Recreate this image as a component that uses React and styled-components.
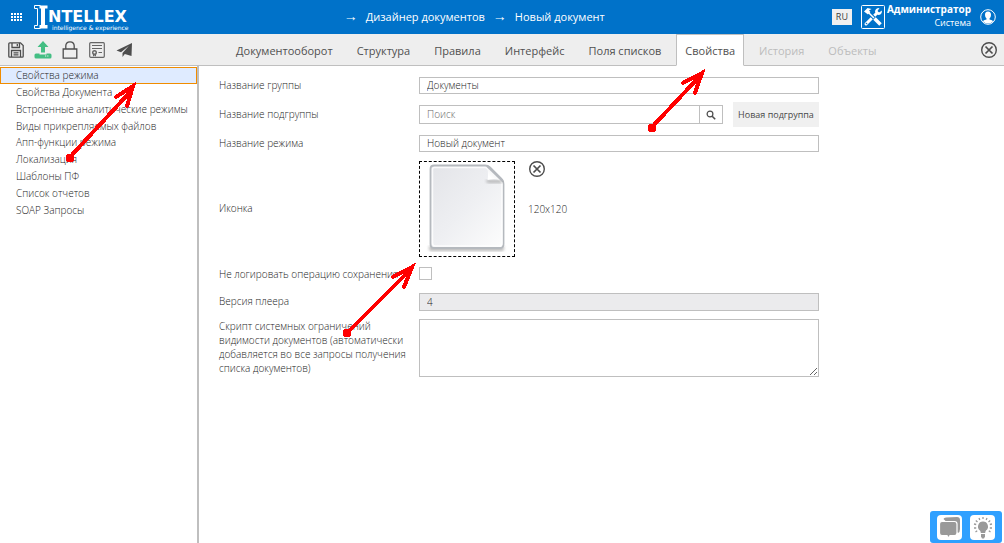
import React, { useState } from 'react';
import styled, { createGlobalStyle } from 'styled-components';

const GlobalStyle = createGlobalStyle`
  * {
    box-sizing: border-box;
  }

  body {
    margin: 0;
    background: #ffffff;
    color: #1c1c1c;
    font-family: 'Open Sans', 'Noto Sans', sans-serif;
    font-size: 10px;
  }

  button, input, textarea {
    margin: 0;
    color: inherit;
    font: inherit;
  }
`;

const Page = styled.div`
  display: flex;
  flex-direction: column;
  min-height: 100vh;
`;

const Header = styled.header`
  display: flex;
  align-items: center;
  height: 34px;
  padding: 0 7px;
  background: #0072c9;
  color: #ffffff;
`;

const Brand = styled.div`
  display: flex;
  align-items: center;
  gap: 9px;
`;

const IconButton = styled.button`
  display: flex;
  align-items: center;
  justify-content: center;
  width: 18px;
  height: 16px;
  padding: 0;
  border: none;
  background: none;
  cursor: pointer;

  svg {
    flex: none;
  }
`;

const Logo = styled.a`
  display: flex;
  color: #ffffff;
  text-decoration: none;
`;

const LogoText = styled.span`
  display: flex;
  flex-direction: column;
  padding-top: 5px;
`;

const LogoName = styled.span`
  font-family: 'DejaVu Sans', sans-serif;
  font-size: 16px;
  font-weight: 700;
  line-height: 15px;
`;

const LogoSlogan = styled.span`
  padding-left: 4px;
  font-family: 'DejaVu Sans', sans-serif;
  font-size: 6px;
  line-height: 7px;
`;

const Breadcrumbs = styled.nav`
  display: flex;
  flex: 1;
  align-items: center;
  justify-content: center;
  gap: 8px;
  padding: 0 12px 2px 0;
  font-size: 11px;
`;

const Crumb = styled.a`
  color: #ffffff;
  text-decoration: none;
`;

const Arrow = styled.span`
  font-size: 14px;
  line-height: 14px;
`;

const Account = styled.div`
  display: flex;
  align-items: center;
`;

const Language = styled.button`
  width: 20px;
  height: 16px;
  margin-right: 9px;
  padding: 0;
  border: none;
  background: #f0f0f0;
  color: #404040;
  font-size: 9px;
  line-height: 14px;
`;

const UserName = styled.div`
  margin: 0 8px 2px 2px;
  font-size: 10px;
  line-height: 13px;
  text-align: right;
`;

const UserRole = styled.div`
  font-size: 9px;
`;

const Toolbar = styled.div`
  display: flex;
  height: 32px;
  border-bottom: 1px solid #bfbfbf;
  background: #eeeeee;
`;

const Tools = styled.div`
  display: flex;
  align-items: center;
  flex: none;
  gap: 9px;
  width: 227px;
  padding-left: 7px;
`;

const Tabs = styled.nav`
  display: flex;
  flex: 1;
  gap: 6px;
`;

const Tab = styled.button`
  height: 32px;
  padding: 0 8px;
  border: 1px solid;
  border-color: ${(props) => (props.$active ? '#bfbfbf #bfbfbf #ffffff' : 'transparent')};
  background: ${(props) => (props.$active ? '#ffffff' : 'none')};
  color: #505050;
  font-size: 11px;
  cursor: pointer;

  &:disabled {
    color: #bcbcbc;
  }
`;

const CloseBox = styled.div`
  display: flex;
  align-items: center;
  padding-right: 6px;
`;

const Content = styled.div`
  display: flex;
  flex: 1;
`;

const Sidebar = styled.aside`
  flex: none;
  width: 199px;
  border-right: 2px solid #bfbfbf;
`;

const Menu = styled.ul`
  display: grid;
  grid-auto-rows: 1fr;
  height: 151px;
  margin: 1px 0 0;
  padding: 0;
  list-style: none;
`;

const MenuItem = styled.li`
  display: flex;
`;

const MenuLink = styled.button`
  flex: 1;
  padding: 0 0 0 15px;
  border: 1px solid ${(props) => (props.$active ? '#f08c00' : 'transparent')};
  background: ${(props) => (props.$active ? '#dfebff' : 'none')};
  font-weight: 300;
  line-height: 14px;
  text-align: left;
  white-space: nowrap;
  cursor: pointer;
`;

const Form = styled.form`
  display: flex;
  flex-direction: column;
  flex: 1;
  gap: 8px;
  max-width: 640px;
  padding: 11px 20px;
  font-weight: 300;
`;

const Row = styled.div`
  display: grid;
  grid-template-columns: 194px 1fr;
  column-gap: 6px;
  align-items: ${(props) => props.$align || 'center'};
  min-height: ${(props) => props.$height || 17}px;
`;

const Label = styled.label`
  line-height: 14px;
  margin-bottom: 2px;
`;

const TextInput = styled.input`
  width: 100%;
  min-width: 0;
  height: ${(props) => props.$height || 17}px;
  padding: 0 7px 1px;
  border: 1px solid #bfbfbf;
  border-radius: 0;
  background: #ffffff;
  outline: none;

  &:read-only {
    background: #ebebed;
  }

  &::placeholder {
    color: #666666;
  }
`;

const SearchLine = styled.div`
  display: flex;
  align-items: center;
`;

const SearchButton = styled.button`
  display: flex;
  flex: none;
  align-items: center;
  justify-content: center;
  width: 23px;
  height: 19px;
  padding: 0;
  border: 1px solid #bfbfbf;
  border-left: none;
  background: #ffffff;
`;

const NewGroupButton = styled.button`
  flex: none;
  width: 86px;
  height: 25px;
  margin-left: 10px;
  padding: 0;
  border: none;
  background: #f0f0f0;
  color: #484848;
  font-size: 9px;
  font-weight: 400;
`;

const IconField = styled.div`
  display: flex;
  gap: 13px;
  padding-top: 1px;
`;

const Preview = styled.div`
  width: 96px;
  height: 96px;
  border: 1px dashed #000000;
`;

const PreviewInfo = styled.div`
  display: grid;
  grid-template-rows: 1fr auto 1fr;
`;

const Checkbox = styled.input`
  appearance: none;
  width: 13px;
  height: 13px;
  margin-bottom: 3px;
  border: 1px solid #bfbfbf;
  background: #ffffff;

  &:checked {
    background: #4d4d4d;
  }
`;

const TextArea = styled.textarea`
  display: block;
  width: 100%;
  height: 58px;
  padding: 2px 7px;
  border: 1px solid #bfbfbf;
  outline: none;
  resize: both;
`;

const Helper = styled.div`
  position: fixed;
  right: 2px;
  bottom: 0;
  display: flex;
  gap: 8px;
  padding: 4px 7px 3px;
  border-radius: 3px;
  background: #2fa0ff;
`;

const HelperButton = styled.button`
  width: 25px;
  height: 25px;
  padding: 0;
  border: none;
  border-radius: 4px;
  background: #ffffff;

  svg {
    display: block;
  }
`;

const Pointers = styled.svg`
  position: absolute;
  top: 0;
  left: 0;
  pointer-events: none;
`;

const TABS = ['Документооборот', 'Структура', 'Правила', 'Интерфейс', 'Поля списков', 'Свойства', 'История', 'Объекты'];
const DISABLED_TABS = ['История', 'Объекты'];

const MENU = [
  'Свойства режима',
  'Свойства Документа',
  'Встроенные аналитические режимы',
  'Виды прикрепляемых файлов',
  'Апп-функции режима',
  'Локализация',
  'Шаблоны ПФ',
  'Список отчетов',
  'SOAP Запросы',
];

const GridIcon = () => (
  <svg width="11" height="9" fill="#fff">
    {[0, 3, 6, 9].map((x) => [0, 3, 6].map((y) => <rect key={`${x}-${y}`} x={x} y={y} width="2" height="2" />))}
  </svg>
);

const LogoMark = () => (
  <svg width="14" height="26" viewBox="0 0 14 26" fill="none" stroke="#fff">
    <path d="M6.500 1.500H.5V4.500H3.500V21.500H.5V24.500H6.500" />
    <path d="M5.500 1.500H13.500V4.500H11V21H13.500V24.500H5.500V21H7V4.500H5.500Z" fill="#fff" stroke="none" />
  </svg>
);

const SaveIcon = () => (
  <svg width="16" height="16" viewBox="0 0 16 16" fill="none" stroke="#4d4d4d" strokeWidth="1.300">
    <path d="M.8 1.800Q.8.800 1.800.8H12.500L15.200 3.500V14.200Q15.200 15.200 14.200 15.200H1.800Q.8 15.200.8 14.200Z" />
    <path d="M4 1V5.500H11.500V1M9.300 2V4.300M3.500 15V8.500H12.500V15M5.500 10.800H10.500M5.500 12.800H10.500" />
  </svg>
);

const UploadIcon = () => (
  <svg width="18" height="18" viewBox="0 0 18 18" fill="#43be83">
    <path d="M9 0L14.500 6H11V11.500H7V6H3.500Z" />
    <path d="M2 12.500H5.500V13.500H12.500V12.500H16Q17.500 12.500 17.500 14V16Q17.500 17.500 16 17.500H2Q.5 17.500.5 16V14Q.5 12.500 2 12.500Z" />
    <path d="M11 15H12.200M13.200 15H14.400" stroke="#eee" />
  </svg>
);

const LockIcon = () => (
  <svg width="16" height="18" viewBox="0 0 16 18" fill="none" stroke="#4d4d4d" strokeWidth="1.300">
    <path d="M1.200 8H14.800V17.200H1.200ZM3.800 8V5Q3.800.8 8 .8T12.200 5V8" />
  </svg>
);

const FormIcon = () => (
  <svg width="16" height="16" viewBox="0 0 16 16" fill="none" stroke="#666">
    <rect x=".7" y=".7" width="14.600" height="14.600" rx="1" strokeWidth="1.200" />
    <path d="M3 3.500H13M3 6.500H13M9.500 10.500H13" />
    <circle cx="5.500" cy="10.500" r="1.800" strokeWidth="1.400" />
    <path d="M4.500 12V14L5.500 13.300L6.500 14V12" />
  </svg>
);

const SendIcon = () => (
  <svg width="16" height="14" viewBox="0 0 16 14" fill="#4d4d4d">
    <path d="M16 0L.5 7.500L5 9.200L13 2.800L6.500 9.900V14L8.800 11L15.500 13Z" />
  </svg>
);

const CloseIcon = () => (
  <svg width="18" height="18" viewBox="0 0 18 18" fill="none" stroke="#4d4d4d" strokeWidth="1.400">
    <circle cx="9" cy="9" r="7.300" />
    <path d="M5.500 5.500L12.500 12.500M12.500 5.500L5.500 12.500" strokeWidth="1.700" />
  </svg>
);

const ToolsIcon = () => (
  <svg width="24" height="24" viewBox="0 0 24 24">
    <rect x=".5" y=".5" width="23" height="23" rx="1" fill="none" stroke="#fff" />
    <path d="M5 19L16 8" stroke="#fff" strokeWidth="3" strokeLinecap="round" />
    <path d="M14 7Q14 3 18.500 3L16.500 6L18 7.500L21 5.500Q21 10 17 10Z" fill="#fff" />
    <path d="M3 6.500L6.500 3L10.500 4L8 5.500L9.500 7L7 9.500L5 8Z" fill="#fff" />
    <path d="M8.500 8.500L13 13M13 13L20 20" stroke="#0072c9" strokeWidth="3.500" />
    <path d="M8 8L13 13" stroke="#fff" strokeWidth="1.500" />
    <path d="M13.500 13.500L19.500 19.500" stroke="#fff" strokeWidth="3.500" />
    <circle cx="5.500" cy="18.500" r=".8" fill="#0072c9" />
  </svg>
);

const UserIcon = () => (
  <svg width="16" height="16" viewBox="0 0 16 16">
    <circle cx="8" cy="8" r="7.300" fill="none" stroke="#fff" />
    <path d="M8 2.500C10.200 2.500 11 4 11 6Q11 8.200 9.500 9.500V10.500Q12.500 11 13.200 12.200Q11 14.500 8 14.500T2.800 12.200Q3.500 11 6.500 10.500V9.500Q5 8.200 5 6C5 4 5.800 2.500 8 2.500Z" fill="#fff" />
  </svg>
);

const SearchIcon = () => (
  <svg width="10" height="10" viewBox="0 0 10 10" fill="none" stroke="#4d4d4d">
    <circle cx="4" cy="4" r="2.900" strokeWidth="1.200" />
    <path d="M6.200 6.200L9.200 9.200" strokeWidth="1.600" />
  </svg>
);

const DocumentPicture = () => (
  <svg width="94" height="94" viewBox="0 0 94 94">
    <defs>
      <linearGradient id="sheet" x1="0" y1="0" x2="1" y2="1">
        <stop offset="0" stopColor="#e3e4e8" />
        <stop offset=".5" stopColor="#eeeff2" />
        <stop offset="1" stopColor="#fdfdfd" />
      </linearGradient>
      <linearGradient id="fold" x1="0" y1="1" x2="1" y2="0">
        <stop offset=".2" stopColor="#ffffff" />
        <stop offset="1" stopColor="#e2e4e7" />
      </linearGradient>
      <filter id="soft">
        <feGaussianBlur stdDeviation="1.500" />
      </filter>
    </defs>
    <path d="M9 84H84V87Q84 89 82 89H11Q9 89 9 87Z" fill="#777" opacity=".5" filter="url(#soft)" />
    <path d="M14 3.500H65Q68 3.500 70 5.500L81.500 17Q83.500 19 83.500 22V82Q83.500 86 80 86H14Q10.500 86 10.500 82V7Q10.500 3.500 14 3.500Z" fill="url(#sheet)" stroke="#b5b9be" strokeWidth="1.800" />
    <path d="M14.500 5.500H66L82 21V81Q82 84 79 84H15.500Q12.500 84 12.500 81V7.500Q12.500 5.500 14.500 5.500Z" fill="none" stroke="#fff" strokeWidth="1.500" opacity=".8" />
    <path d="M66 18H82V21H69Q66 21 66 18Z" fill="#777" opacity=".5" filter="url(#soft)" />
    <path d="M67.500 5Q68.500 14 67.500 18Q75 16.500 82.500 18.500Z" fill="url(#fold)" />
    <path d="M67 4L82.500 19" fill="none" stroke="#b5b9be" strokeWidth="1.800" />
  </svg>
);

const ChatIcon = () => (
  <svg width="25" height="25" viewBox="0 0 25 25" fill="#999">
    <path d="M6.500 4Q7 2.500 9 2.500L20 2Q23 2 23 5V14Q23 17 21 18Z" />
    <path d="M5 6.500H17.500Q20 6.500 20 9V18Q20 20.500 17.500 20.500H13L11.500 23L10 20.500H5Q2.500 20.500 2.500 18V9Q2.500 6.500 5 6.500Z" stroke="#fff" strokeWidth="1.200" />
  </svg>
);

const BulbIcon = () => (
  <svg width="25" height="25" viewBox="0 0 25 25" fill="#999">
    <path d="M13 6.500A5 5 0 0 1 16 15.500Q15.200 16.500 15.200 18H10.800Q10.800 16.500 10 15.500A5 5 0 0 1 13 6.500Z" />
    <path d="M11 19H15V21.500L14 23.500H12L11 21.500Z" />
    <path d="M13 2V4M9 3L9.800 5M17 3L16.200 5M5.800 5.500L7.500 7M20.200 5.500L18.500 7M4 9L6.200 9.500M22 9L19.800 9.500M4 13H6.200M22 13H19.800M5.500 17L7.200 15.800M20.500 17L18.800 15.800" stroke="#999" strokeWidth="1.300" />
  </svg>
);

const POINTERS = [
  { line: 'M70 157L131 91', head: 'M116 97L133 86L127 106', x: 70, y: 158 },
  { line: 'M652 127L700 76', head: 'M683 83L702 73L695 93', x: 652, y: 128 },
  { line: 'M347 333L409 271', head: 'M393 277L412 267L404 287', x: 347, y: 333 },
];

const App = () => {
  const [activeTab, setActiveTab] = useState('Свойства');
  const [activeItem, setActiveItem] = useState('Свойства режима');

  return (
    <Page>
      <GlobalStyle />
      <Header>
        <Brand>
          <IconButton aria-label="Приложения"><GridIcon /></IconButton>
          <Logo href="#">
            <LogoMark />
            <LogoText>
              <LogoName>NTELLEX</LogoName>
              <LogoSlogan>intelligence &amp; experience</LogoSlogan>
            </LogoText>
          </Logo>
        </Brand>
        <Breadcrumbs>
          <Arrow>→</Arrow>
          <Crumb href="#">Дизайнер документов</Crumb>
          <Arrow>→</Arrow>
          <Crumb href="#">Новый документ</Crumb>
        </Breadcrumbs>
        <Account>
          <Language>RU</Language>
          <ToolsIcon />
          <UserName>
            <strong>Администратор</strong>
            <UserRole>Система</UserRole>
          </UserName>
          <IconButton aria-label="Профиль"><UserIcon /></IconButton>
        </Account>
      </Header>

      <Toolbar>
        <Tools>
          <IconButton aria-label="Сохранить"><SaveIcon /></IconButton>
          <IconButton aria-label="Загрузить"><UploadIcon /></IconButton>
          <IconButton aria-label="Блокировка"><LockIcon /></IconButton>
          <IconButton aria-label="Форма"><FormIcon /></IconButton>
          <IconButton aria-label="Отправить"><SendIcon /></IconButton>
        </Tools>
        <Tabs>
          {TABS.map((tab) => (
            <Tab
              key={tab}
              $active={tab === activeTab}
              disabled={DISABLED_TABS.includes(tab)}
              onClick={() => setActiveTab(tab)}
            >
              {tab}
            </Tab>
          ))}
        </Tabs>
        <CloseBox>
          <IconButton aria-label="Закрыть"><CloseIcon /></IconButton>
        </CloseBox>
      </Toolbar>

      <Content>
        <Sidebar>
          <Menu>
            {MENU.map((item) => (
              <MenuItem key={item}>
                <MenuLink $active={item === activeItem} onClick={() => setActiveItem(item)}>{item}</MenuLink>
              </MenuItem>
            ))}
          </Menu>
        </Sidebar>

        <Form onSubmit={(e) => e.preventDefault()}>
          <Row>
            <Label htmlFor="group">Название группы</Label>
            <TextInput id="group" defaultValue="Документы" />
          </Row>
          <Row $height={25}>
            <Label htmlFor="subgroup">Название подгруппы</Label>
            <SearchLine>
              <TextInput id="subgroup" placeholder="Поиск" $height={19} />
              <SearchButton aria-label="Найти"><SearchIcon /></SearchButton>
              <NewGroupButton>Новая подгруппа</NewGroupButton>
            </SearchLine>
          </Row>
          <Row>
            <Label htmlFor="mode">Название режима</Label>
            <TextInput id="mode" defaultValue="Новый документ" />
          </Row>
          <Row>
            <Label as="span">Иконка</Label>
            <IconField>
              <Preview><DocumentPicture /></Preview>
              <PreviewInfo>
                <IconButton type="button" aria-label="Удалить иконку"><CloseIcon /></IconButton>
                <span>120x120</span>
              </PreviewInfo>
            </IconField>
          </Row>
          <Row $height={20}>
            <Label htmlFor="nolog">Не логировать операцию сохранения</Label>
            <Checkbox id="nolog" type="checkbox" />
          </Row>
          <Row>
            <Label htmlFor="version">Версия плеера</Label>
            <TextInput id="version" defaultValue="4" readOnly $height={18} />
          </Row>
          <Row $align="start">
            <Label htmlFor="script">
              Скрипт системных ограничений видимости документов (автоматически добавляется во все запросы получения списка документов)
            </Label>
            <TextArea id="script" />
          </Row>
        </Form>
      </Content>

      <Helper>
        <HelperButton aria-label="Чат"><ChatIcon /></HelperButton>
        <HelperButton aria-label="Подсказки"><BulbIcon /></HelperButton>
      </Helper>

      <Pointers width="830" height="390" fill="none" stroke="#ff0000" shapeRendering="crispEdges">
        {POINTERS.map((p) => (
          <g key={p.line} strokeLinecap="round">
            <path d={p.line} strokeWidth="4" />
            <path d={p.head} strokeWidth="4" />
            <circle cx={p.x} cy={p.y} r="4.5" fill="#ff0000" stroke="none" />
          </g>
        ))}
      </Pointers>
    </Page>
  );
};

export default App;
